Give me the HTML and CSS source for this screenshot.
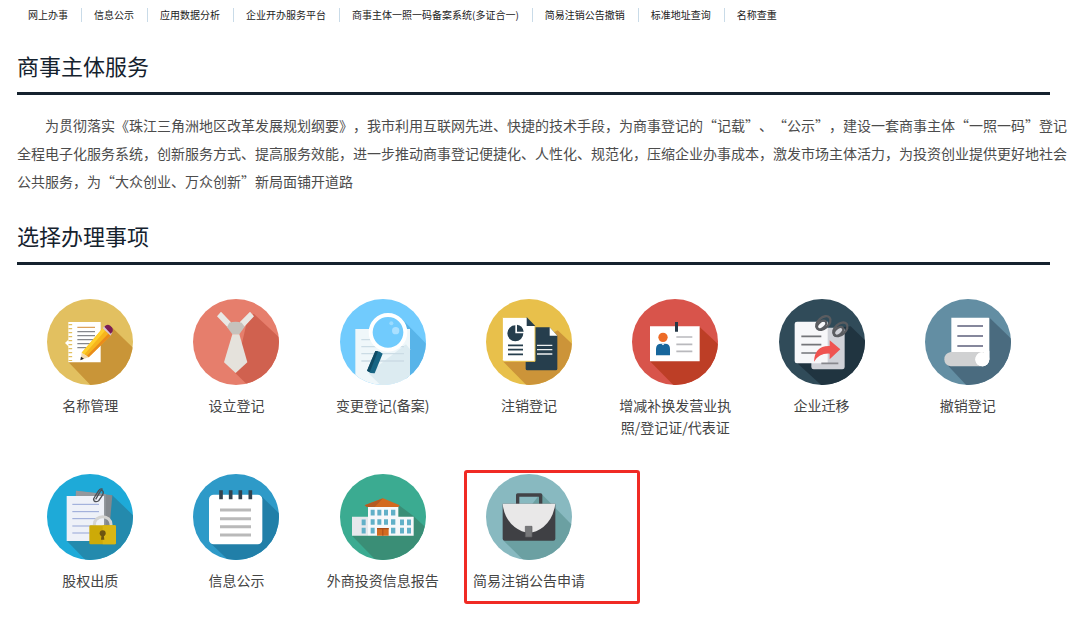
FILE: index.html
```html
<!DOCTYPE html>
<html lang="zh-CN">
<head>
<meta charset="utf-8">
<meta name="viewport" content="width=device-width, initial-scale=1">
<title>商事主体服务</title>
<link rel="stylesheet" href="styles.css">
</head>
<body>
<nav class="topnav">
  <a href="#">网上办事</a>
  <a href="#">信息公示</a>
  <a href="#">应用数据分析</a>
  <a href="#">企业开办服务平台</a>
  <a href="#">商事主体一照一码备案系统(多证合一)</a>
  <a href="#">简易注销公告撤销</a>
  <a href="#">标准地址查询</a>
  <a href="#">名称查重</a>
</nav>
<main class="page">
  <section>
    <h1 class="title">商事主体服务</h1>
    <p class="intro">为贯彻落实《珠江三角洲地区改革发展规划纲要》，我市利用互联网先进、快捷的技术手段，为商事登记的“记载”、“公示”，建设一套商事主体“一照一码”登记全程电子化服务系统，创新服务方式、提高服务效能，进一步推动商事登记便捷化、人性化、规范化，压缩企业办事成本，激发市场主体活力，为投资创业提供更好地社会公共服务，为“大众创业、万众创新”新局面铺开道路</p>
  </section>
  <section>
    <h2 class="title">选择办理事项</h2>
    <div class="services">
      <a class="service" href="#">
        <svg class="icon" viewBox="52 24 258 258" aria-hidden="true">
          <rect x="50" y="20" width="262" height="264" fill="#e2c060"/>
          <path d="M116 213L212 140 246 108 320 180V290H190Z" fill="#c99538"/>
          <path d="M116 93H213V214H116V166L106 156 116 146Z" fill="#fff"/>
          <path d="M122 99V210" stroke="#e2c060" stroke-width="11" stroke-dasharray="4 8"/>
          <path d="M143 109H196" stroke="#dda25c" stroke-width="4"/>
          <path d="M143 122H196M143 134H196M143 146H196M143 158H190M143 170H176" stroke="#85878c" stroke-width="4"/>
          <path d="M156 185L219 112 243 134 177 199Z" fill="#f6b51d"/>
          <path d="M156 185L219 112 226 119 163 191Z" fill="#ffd02e"/>
          <path d="M171 195L236 128 243 134 177 199Z" fill="#e98b1c"/>
          <path d="M156 185L177 199 153 207Z" fill="#f3d9ad"/>
          <path d="M154 197L163 203 152 208Z" fill="#26252b"/>
          <path d="M219 112L226 104 248 124 243 134Z" fill="#dcc6d0"/>
          <path d="M224 107Q232 98 242 104 253 112 248 123L243 128Z" fill="#7a1e55"/>
        </svg>
        <span class="label">名称管理</span>
      </a>
      <a class="service" href="#">
        <svg class="icon" viewBox="492 26 258 258" aria-hidden="true">
          <rect x="490" y="20" width="262" height="266" fill="#e67e6c"/>
          <path d="M618 247L655 90 674 70 760 150V290H662Z" fill="#d0614f"/>
          <path d="M564 78L576 64 606 96 597 112ZM675 78L663 64 632 96 643 112Z" fill="#e9e8e4"/>
          <path d="M601 97Q620 91 638 97L647 109 631 132H610L594 110Z" fill="#c6c2bc"/>
          <path d="M610 132H631L655 216 620 248 585 216Z" fill="#e5e2dc"/>
        </svg>
        <span class="label">设立登记</span>
      </a>
      <a class="service" href="#">
        <svg class="icon" viewBox="60 24 258 258" aria-hidden="true">
          <rect x="58" y="20" width="264" height="266" fill="#71cbfd"/>
          <path d="M245 83L330 170V290H258Z" fill="#58b4e9"/>
          <path d="M106 114H270V290H106Z" fill="#eff7fa"/>
          <path d="M145 247L258 160 270 175V290H190Z" fill="#dcebf1"/>
          <path d="M124 146H252M124 167H252M124 188H252M124 210H252" stroke="#cbdce5" stroke-width="4"/>
          <circle cx="204" cy="124" r="52" fill="#71cbfd" stroke="#fff" stroke-width="12"/>
          <circle cx="227" cy="119" r="11" fill="#aae0ff"/>
          <circle cx="214" cy="97" r="6" fill="#9adbff"/>
          <path d="M166 180Q178 178 188 188L164 247Q151 248 141 239Z" fill="#176584"/>
          <path d="M166 180L174 181 149 244 141 239Z" fill="#104c65"/>
        </svg>
        <span class="label">变更登记(备案)</span>
      </a>
      <a class="service" href="#">
        <svg class="icon" viewBox="499 26 258 258" aria-hidden="true">
          <rect x="497" y="22" width="264" height="266" fill="#e8c04b"/>
          <path d="M548 211L714 120 760 163V290H626Z" fill="#cc9439"/>
          <path d="M618 111H690L713 136V235Q713 240 708 240H623Q618 240 618 235Z" fill="#263e4d"/>
          <path d="M690 111V136H713Z" fill="#fff"/>
          <path d="M652 165H698M652 178H698M652 191H698" stroke="#eef0f0" stroke-width="4"/>
          <path d="M548 81H621L646 107V213H553Q548 213 548 208Z" fill="#fff" stroke="#e8c04b" stroke-width="3"/>
          <path d="M621 80V107H647Z" fill="#263e4d"/>
          <path d="M587 105V129H611A24 24 0 1 1 587 105Z" fill="#263e4d"/>
          <path d="M592 124V103Q609 105 612 124Z" fill="#263e4d"/>
          <path d="M565 165H610M565 178H610M565 192H610" stroke="#263e4d" stroke-width="5"/>
        </svg>
        <span class="label">注销登记</span>
      </a>
      <a class="service" href="#">
        <svg class="icon" viewBox="69 26 258 258" aria-hidden="true">
          <rect x="67" y="22" width="264" height="266" fill="#d8544b"/>
          <path d="M123 213L272 110 330 164V290H199Z" fill="#bd3e26"/>
          <path d="M123 108H272V213H123Z" fill="#fff"/>
          <path d="M198 95H207V124H198Z" fill="#253746"/>
          <circle cx="162" cy="141" r="14" fill="#ed6b27"/>
          <path d="M141 195V176Q141 160 157 160H168Q183 160 183 176V195Z" fill="#17669c"/>
          <path d="M157 160L162 165 167 160Z" fill="#fff"/>
          <path d="M202 140H250M202 162H250M202 183H250" stroke="#b9b9bd" stroke-width="5"/>
        </svg>
        <span class="label">增减补换发营业执照/登记证/代表证</span>
      </a>
      <a class="service" href="#">
        <svg class="icon" viewBox="507 26 258 258" aria-hidden="true">
          <rect x="505" y="22" width="264" height="266" fill="#304b59"/>
          <path d="M558 215L700 110 722 108 770 155V290H640Z" fill="#203440"/>
          <rect x="604" y="112" width="100" height="125" rx="7" fill="#d0d2d8"/>
          <path d="M561 94H653V219H561Q554 219 554 212V101Q554 94 561 94Z" fill="#f7f7f9"/>
          <path d="M574 138H634M574 163H634M574 188H620" stroke="#747579" stroke-width="5"/>
          <path d="M634 219H685" stroke="#87888d" stroke-width="5"/>
          <path d="M612 214Q614 165 659 167V150L691 177 659 207V190Q628 188 612 214Z" fill="#ef5350"/>
          <g fill="none" stroke="#5a5c60" stroke-width="7">
            <ellipse cx="640" cy="98" rx="25" ry="16" transform="rotate(-42 640 98)"/>
            <ellipse cx="635" cy="104" rx="16" ry="10" transform="rotate(-42 635 104)"/>
            <ellipse cx="691" cy="117" rx="25" ry="16" transform="rotate(-42 691 117)"/>
            <ellipse cx="686" cy="123" rx="16" ry="10" transform="rotate(-42 686 123)"/>
          </g>
        </svg>
        <span class="label">企业迁移</span>
      </a>
      <a class="service" href="#">
        <svg class="icon" viewBox="45 25 258 258" aria-hidden="true">
          <rect x="43" y="22" width="264" height="266" fill="#638ea3"/>
          <path d="M110 221L237 80 310 150V290H175Z" fill="#4a6b7f"/>
          <path d="M124 81H238V206H124Z" fill="#fff"/>
          <path d="M142 106H219M142 136H219M142 166H219" stroke="#85879c" stroke-width="6"/>
          <path d="M122 184H222V227H122Q103 224 103 206 103 188 122 184Z" fill="#d0d1d2"/>
          <path d="M238 180V206A21 21 0 1 1 214 185Q222 185 222 192Z" fill="#fff"/>
          <circle cx="217" cy="206" r="21" fill="#fff"/>
        </svg>
        <span class="label">撤销登记</span>
      </a>
      <a class="service" href="#">
        <svg class="icon" viewBox="52 27 258 258" aria-hidden="true">
          <rect x="50" y="22" width="264" height="266" fill="#1eaad8"/>
          <path d="M112 228L247 90 320 160V290H172Z" fill="#248aad"/>
          <path d="M139 77L248 91 238 205 130 192Z" fill="#83888d"/>
          <path d="M139 77L228 87V190H139Z" fill="#93989d"/>
          <path d="M111 93H223V228H111Z" fill="#eef1f8"/>
          <path d="M128 118H208M128 140H208M128 161H208M128 183H200M128 204H180" stroke="#95a5d6" stroke-width="3"/>
          <path d="M198 103L210 82Q215 72 220 79 223 84 216 94L207 107Q199 113 193 107 190 101 196 94L207 77Q213 69 219 73" fill="none" stroke="#4c4f55" stroke-width="4"/>
          <path d="M194 184V178A25 23 0 0 1 244 178V184" fill="none" stroke="#d4d4d2" stroke-width="9"/>
          <rect x="179" y="181" width="80" height="57" rx="4" fill="#cdaa08"/>
          <path d="M219 181H255Q259 181 259 185V234Q259 238 255 238H219Z" fill="#d9b613"/>
          <circle cx="219" cy="205" r="9" fill="#6d5410"/>
          <path d="M216 207H222L224 224H214Z" fill="#6d5410"/>
        </svg>
        <span class="label">股权出质</span>
      </a>
      <a class="service" href="#">
        <svg class="icon" viewBox="492 26 258 258" aria-hidden="true">
          <rect x="490" y="22" width="264" height="266" fill="#2e9ac8"/>
          <path d="M545 234L694 90 760 153V290H604Z" fill="#217fa8"/>
          <rect x="540" y="88" width="160" height="149" rx="14" fill="#fff"/>
          <path d="M576 75V102M605 75V102M634 75V102M664 75V102" stroke="#33434e" stroke-width="11"/>
          <path d="M573 134H666M573 160H666M573 184H666M573 209H666" stroke="#b9b9b9" stroke-width="9"/>
        </svg>
        <span class="label">信息公示</span>
      </a>
      <a class="service" href="#">
        <svg class="icon" viewBox="61 28 258 258" aria-hidden="true">
          <rect x="59" y="24" width="264" height="266" fill="#3bab91"/>
          <path d="M97 213L236 120 282 155 325 195V290H172Z" fill="#3a8e76"/>
          <path d="M97 156H145V213H97Z" fill="#e6e8ec"/>
          <path d="M145 125H236V156H282V213H145Z" fill="#f7f8fa"/>
          <path d="M135 122L190 101 240 122 236 127H142Z" fill="#d2691e"/>
          <path d="M135 122L190 101 165 127H142Z" fill="#b55a22"/>
          <g fill="none" stroke="#62b0c8" stroke-width="17">
            <path d="M153 144H165M173 144H185M193 144H205M214 144H227"/>
            <path d="M153 172H165M173 172H185M193 172H205M214 172H227M126 173H138M241 173H253M262 173H274"/>
            <path d="M153 198H165M214 198H227M126 198H138M241 198H253M262 198H274"/>
          </g>
          <path d="M172 190H207V213H172Z" fill="#d36b20"/>
          <path d="M172 190H207V194H172ZM188 194H191V213H188Z" fill="#a94c1b"/>
        </svg>
        <span class="label">外商投资信息报告</span>
      </a>
      <a class="service service-marked" href="#">
        <svg class="icon" viewBox="498 28 258 258" aria-hidden="true">
          <rect x="496" y="24" width="264" height="266" fill="#88b9c0"/>
          <path d="M551 228L660 88 667 90 760 185V290H614Z" fill="#6ba0a2"/>
          <path d="M593 120V91H662V120" fill="none" stroke="#424347" stroke-width="10" stroke-linejoin="round"/>
          <path d="M548 117H706V222Q706 228 700 228H554Q548 228 548 222Z" fill="#3f4044"/>
          <path d="M548 117H706Q700 162 670 187 627 220 584 187 552 161 548 117Z" fill="#e9e8e8"/>
          <path d="M616 185H636V217H616Z" fill="#77787a" stroke="#5d5e61" stroke-width="2"/>
        </svg>
        <span class="label">简易注销公告申请</span>
      </a>
    </div>
  </section>
</main>
</body>
</html>
```
FILE: styles.css
```css
* {
  box-sizing: border-box;
}

body {
  margin: 0;
  background: #fff;
  color: #444;
  font-family: "Noto Sans CJK SC", sans-serif;
  font-size: 14px;
  text-spacing-trim: space-all;
}

a {
  color: inherit;
  text-decoration: none;
}

.topnav {
  display: flex;
  padding: 8px 16px 0;
  font-size: 10px;
  line-height: 14px;
  color: #222;
}

.topnav a {
  padding: 0 13px 0 12px;
  white-space: nowrap;
}

.topnav a + a {
  border-left: 1px solid #c9dbe8;
}

.page {
  padding: 26px 30px 0 17px;
}

.title {
  margin: 0;
  padding-bottom: 10px;
  border-bottom: 3px solid #15222e;
  color: #15222e;
  font-size: 22px;
  font-weight: 400;
  line-height: 34px;
}

.intro {
  margin: 16px -18px 23px 0;
  color: #4c4c4c;
  line-height: 28px;
  text-indent: 2em;
}

.services {
  display: grid;
  grid-template-columns: repeat(7, 1fr);
  row-gap: 36px;
  padding: 34px 9px 24px 0;
}

.service {
  position: relative;
  display: flex;
  flex-direction: column;
  align-items: center;
}

.icon {
  width: 86px;
  height: 86px;
  border-radius: 50%;
}

.label {
  width: 112px;
  margin-top: 9px;
  line-height: 22px;
  text-align: center;
}

.service-marked::after {
  content: "";
  position: absolute;
  inset: -4px -38px -13px 8px;
  border: 3px solid #f02a24;
  border-radius: 3px;
}
```
